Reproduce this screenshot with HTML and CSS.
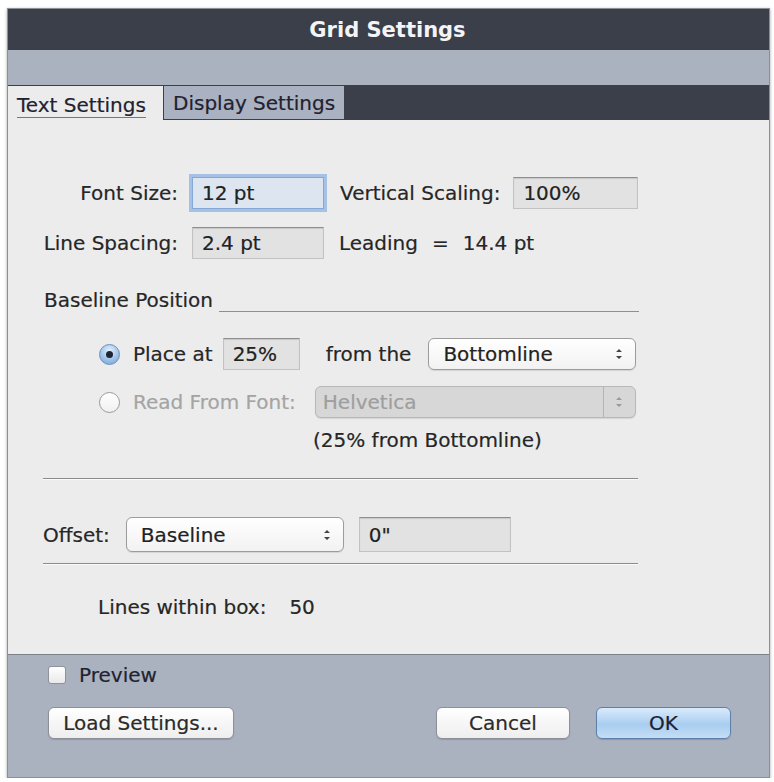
FILE: index.html
```html
<!DOCTYPE html>
<html>
<head>
<meta charset="utf-8">
<link rel="stylesheet" href="styles.css">
</head>
<body>
<div class="dialog">
  <div class="titlebar">Grid Settings</div>
  <div class="band"></div>
  <div class="tabs">
    <div class="tab active"><span>Text Settings</span></div>
    <div class="tab">Display Settings</div>
  </div>
  <div class="content">
    <div class="row r1">
      <label class="lbl">Font Size:</label>
      <div class="field focus w132">12 pt</div>
      <label class="lbl2">Vertical Scaling:</label>
      <div class="field w125">100%</div>
    </div>
    <div class="row r2">
      <label class="lbl">Line Spacing:</label>
      <div class="field w132">2.4 pt</div>
      <span class="lead">Leading</span><span class="eq">=</span><span>14.4 pt</span>
    </div>
    <div class="heading">
      <span>Baseline Position</span>
      <div class="hline"></div>
    </div>
    <div class="row radio-row rr1">
      <span class="radio on"></span>
      <span class="rlabel">Place at</span>
      <div class="field w77">25%</div>
      <span class="from">from the</span>
      <div class="popup w208"><span>Bottomline</span><svg class="arr" viewBox="0 0 8 14" width="8" height="14"><path d="M1 5 L4 2 L7 5 Z M1 9 L4 12 L7 9 Z" fill="#444"/></svg></div>
    </div>
    <div class="row radio-row rr2">
      <span class="radio"></span>
      <span class="rlabel dis">Read From Font:</span>
      <div class="popup dispop"><span>Helvetica</span><span class="dsep"></span><svg class="arr" viewBox="0 0 8 14" width="8" height="14"><path d="M1 5 L4 2 L7 5 Z M1 9 L4 12 L7 9 Z" fill="#9a9a9a"/></svg></div>
    </div>
    <div class="note">(25% from Bottomline)</div>
    <div class="sep s1"></div>
    <div class="row offset">
      <label class="olbl">Offset:</label>
      <div class="popup w218"><span>Baseline</span><svg class="arr" viewBox="0 0 8 14" width="8" height="14"><path d="M1 5 L4 2 L7 5 Z M1 9 L4 12 L7 9 Z" fill="#444"/></svg></div>
      <div class="field w152">0"</div>
    </div>
    <div class="sep s2"></div>
    <div class="lines"><span>Lines within box:</span><span class="num">50</span></div>
  </div>
  <div class="footer">
    <div class="check-row"><span class="check"></span><span>Preview</span></div>
    <div class="btn-row">
      <button class="btn load">Load Settings...</button>
      <div class="spacer"></div>
      <button class="btn cancel">Cancel</button>
      <button class="btn ok">OK</button>
    </div>
  </div>
</div>
</body>
</html>
```

FILE: styles.css
```css
* { box-sizing: border-box; }
body {
  margin: 0;
  background: #ffffff;
  font-family: "DejaVu Sans", "Liberation Sans", sans-serif;
  font-size: 20px;
  line-height: 24px;
  color: #262626;
  -webkit-text-stroke: 0.2px currentColor;
}
.dialog {
  margin: 8px 0 0 7px;
  width: 763px;
  height: 770px;
  border: 1px solid #8c8f96;
  box-shadow: 0 1px 3px rgba(0,0,0,0.35);
  display: flex;
  flex-direction: column;
  background: #aab1bf;
}
.titlebar {
  height: 41px;
  background: #3b3f49;
  color: #f4f4f6;
  font-weight: bold;
  font-size: 21px;
  display: flex;
  align-items: center;
  justify-content: center;
  padding-right: 2px;
  -webkit-text-stroke: 0;
}
.band {
  height: 35px;
  background: #aab2bf;
}
.tabs {
  height: 35px;
  background: #3b3f49;
  display: flex;
  align-items: flex-start;
}
.tab {
  height: 33px;
  margin-top: 1px;
  width: 180px;
  background: #aab1c0;
  color: #1f2230;
  font-size: 20px;
  display: flex;
  align-items: center;
  padding-left: 9px;
}
.tab.active {
  width: 155px;
  height: 34px;
  background: #ececec;
  padding-left: 9px;
  margin-right: 1px;
}
.tab.active span {
  border-bottom: 1px solid #777;
  line-height: 24px;
  margin-top: 4px;
}
.content {
  height: 535px;
  background: #ececec;
  border-bottom: 1px solid #7d818a;
  padding-left: 35px;
  padding-top: 57px;
  display: flex;
  flex-direction: column;
}
.row {
  display: flex;
  align-items: center;
  height: 32px;
}
.r2 { margin-top: 18px; }
.lbl {
  width: 135px;
  text-align: right;
  margin-right: 14px;
}
.lbl2 {
  margin-left: 16px;
  margin-right: 13px;
}
.field {
  height: 32px;
  background: #e2e2e2;
  border: 1px solid #c2c2c2;
  border-top-color: #8e8e8e;
  box-shadow: inset 0 1px 1px rgba(0,0,0,0.12);
  display: flex;
  align-items: center;
  padding-left: 9px;
  color: #222;
}
.field.focus {
  background: #dce5f0;
  border-color: #86a8d4;
  box-shadow: 0 0 0 3px #a5c1e6;
}
.w132 { width: 132px; }
.w125 { width: 125px; }
.w77 { width: 77px; }
.w152 { width: 152px; }
.lead { margin-left: 15px; margin-right: 14px; }
.eq { margin-right: 14px; }
.heading {
  margin-top: 29px;
  height: 24px;
  display: flex;
  align-items: center;
  width: 596px;
  padding-left: 1px;
}
.hline {
  flex: 1;
  height: 1px;
  background: #8f8f8f;
  margin-left: 6px;
  margin-top: 23px;
}
.radio-row { padding-left: 56px; }
.rr1 { margin-top: 26px; }
.rr2 { margin-top: 16px; }
.radio {
  width: 21px;
  height: 21px;
  border-radius: 50%;
  border: 1px solid #9a9a9a;
  background: linear-gradient(#ffffff, #f0f0f0);
  margin-right: 13px;
  position: relative;
  flex: none;
}
.radio.on {
  border-color: #6a8fbf;
  background: radial-gradient(circle at 50% 30%, #e3f0fc, #8fb7e4 70%, #7aa6d8);
}
.radio.on::after {
  content: "";
  position: absolute;
  left: 6px;
  top: 6px;
  width: 7px;
  height: 7px;
  border-radius: 50%;
  background: #1d2530;
}
.rlabel { margin-right: 10px; }
.rlabel.dis { color: #a4a4a4; margin-right: 19px; }
.from { margin-left: 26px; margin-right: 17px; }
.popup {
  height: 32px;
  border: 1px solid #9c9c9c;
  border-radius: 6px;
  background: linear-gradient(#ffffff, #f2f2f2);
  box-shadow: 0 1px 1px rgba(0,0,0,0.1);
  display: flex;
  align-items: center;
  padding-left: 14px;
  padding-right: 12px;
  color: #222;
}
.popup span:first-child { flex: 1; }
.w208 { width: 208px; }
.w218 { width: 218px; margin-right: 15px; }
.dispop {
  width: 321px;
  background: #d7d7d7;
  color: #9e9e9e;
  border-color: #b8b8b8;
  padding-left: 7px;
}
.dsep {
  width: 1px;
  align-self: stretch;
  background: #b4b4b4;
  margin-right: 11px;
}
.note {
  margin-top: 10px;
  height: 24px;
  margin-left: 270px;
}
.sep {
  width: 595px;
  height: 2px;
  border-top: 1px solid #8c8c8c;
  border-bottom: 1px solid #fafafa;
}
.s1 { margin-top: 26px; }
.offset { margin-top: 37px; height: 35px; }
.offset .popup, .offset .field { height: 35px; }
.olbl { margin-right: 16px; }
.s2 { margin-top: 11px; }
.lines {
  margin-top: 30px;
  margin-left: 55px;
  height: 24px;
}
.lines .num { margin-left: 23px; }
.footer {
  flex: 1;
  background: #aab1bf;
  padding: 11px 38px 0 40px;
  display: flex;
  flex-direction: column;
}
.check-row {
  display: flex;
  align-items: center;
  height: 18px;
  color: #1f2330;
}
.check {
  width: 18px;
  height: 18px;
  border-radius: 3px;
  border: 1px solid #8e939c;
  background: linear-gradient(#ffffff, #e9e9ea);
  margin-right: 13px;
}
.btn-row {
  margin-top: 23px;
  display: flex;
  height: 32px;
}
.spacer { flex: 1; }
.btn {
  height: 32px;
  border: 1px solid #8d9099;
  border-radius: 6px;
  background: linear-gradient(#ffffff, #eeeeee);
  font-family: inherit;
  font-size: 20px;
  color: #2a2a2a;
  box-shadow: 0 1px 1px rgba(0,0,0,0.15);
  padding: 0;
  -webkit-text-stroke: 0.2px currentColor;
}
.load { width: 186px; }
.cancel { width: 134px; margin-right: 26px; }
.ok {
  width: 135px;
  border-color: #5f7fab;
  background: linear-gradient(#d9ebfb, #a9cdf0 55%, #c4def6);
  color: #1b2030;
}
```
